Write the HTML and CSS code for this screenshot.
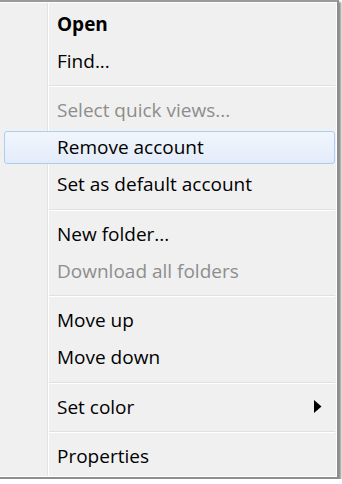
FILE: index.html
```html
<!DOCTYPE html>
<html lang="en">
<head>
    <meta charset="UTF-8">
    <meta name="viewport" content="width=device-width, initial-scale=1.0">
    <title>Account menu</title>
    <link rel="stylesheet" href="styles.css">
</head>
<body>
    <div class="menu">
        <div class="item default">Open</div>
        <div class="item">Find...</div>
        <div class="separator"></div>
        <div class="item disabled">Select quick views...</div>
        <div class="item hover">Remove account</div>
        <div class="item">Set as default account</div>
        <div class="separator"></div>
        <div class="item">New folder...</div>
        <div class="item disabled">Download all folders</div>
        <div class="separator"></div>
        <div class="item">Move up</div>
        <div class="item">Move down</div>
        <div class="separator"></div>
        <div class="item submenu">
            <span>Set color</span>
            <svg class="arrow" width="8" height="13" viewBox="0 0 8 13">
                <polygon points="0,0 7.5,6.5 0,13" fill="#000"/>
            </svg>
        </div>
        <div class="separator"></div>
        <div class="item">Properties</div>
    </div>
</body>
</html>
```

FILE: styles.css
```css
* {
    margin: 0;
    padding: 0;
    box-sizing: border-box;
}

body {
    background: #fff;
    font-family: 'Open Sans', 'Noto Sans', sans-serif;
}

.menu {
    width: 339px;
    display: flex;
    flex-direction: column;
    padding: 3px 0 2px 0;
    border-top: 2px solid #9a9a9a;
    border-right: 2px solid #8e8e8e;
    border-bottom: 2px solid #8e8e8e;
    background:
        linear-gradient(to right, transparent 47px, #e2e3e3 47px, #e2e3e3 48px, #fff 48px, #fff 49px, transparent 49px),
        #f0f0f0;
    box-shadow:
        inset 0 1px 0 #fff,
        inset -1px -1px 0 #fff,
        2px 2px 2px rgba(0, 0, 0, 0.45);
}

.item {
    height: 33px;
    margin: 2px 2px 2px 4px;
    padding-left: 52px;
    padding-right: 12px;
    border: 1px solid transparent;
    border-radius: 3px;
    display: flex;
    align-items: center;
    justify-content: space-between;
    font-size: 19px;
    color: #000;
}

.item.default {
    font-weight: 700;
}

.item.disabled {
    color: #8d8d8d;
}

.item.hover {
    border-color: #aecdf3;
    background: linear-gradient(#f1f6fd, #e2ecf9);
}

.arrow {
    display: block;
}

.separator {
    height: 0;
    margin: 6px 2px 4.5px 49px;
    border-top: 1px solid #e0e0e0;
    border-bottom: 1px solid #fff;
}
```
